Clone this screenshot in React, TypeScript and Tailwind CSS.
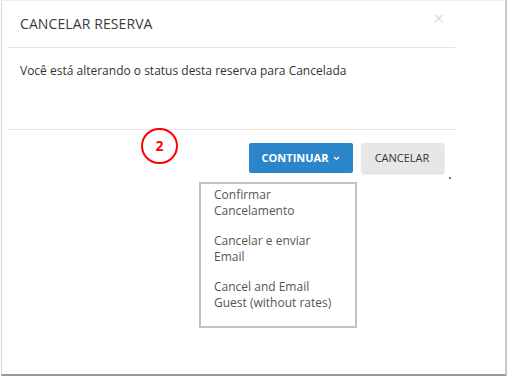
const font = { fontFamily: '"Open Sans", "Liberation Sans", sans-serif' };

const menuItems = [
  ['Confirmar', 'Cancelamento'],
  ['Cancelar e enviar', 'Email'],
  ['Cancel and Email', 'Guest (without rates)'],
];

export default function App() {
  return (
    <div className="w-[509px] h-[378px] bg-white" style={font}>
      <div className="relative ml-[1px] w-[506px] h-[376px] bg-white border-l border-l-[#d6d6d6] border-r-2 border-r-[#c8c8c8] border-b-2 border-b-[#9a9a9a] border-t border-t-[#eeeeee]">
        <div className="ml-[6px] w-[447px]">
          {/* header */}
          <div className="relative h-[47px] border-b border-[#e5e5e5] flex items-center pl-[12px]">
            <h4 className="text-[14px] font-normal text-[#3a3a3a] tracking-[0.1px] mt-[-1px]">CANCELAR RESERVA</h4>
            <span className="absolute right-[11px] top-[8px] text-[19px] leading-none text-[#cccccc] font-light">
              ×
            </span>
          </div>
          {/* body */}
          <div className="h-[82px] border-b border-[#e5e5e5] pl-[12px] pt-[15px]">
            <p className="text-[12px] leading-[16px] text-[#333]">
              Você está alterando o status desta reserva para Cancelada
            </p>
          </div>
          {/* footer */}
          <div className="flex justify-end gap-[8px] pr-[12px] pt-[13px]">
            <button className="w-[104px] h-[30px] rounded-[2px] bg-[#2a86c9] text-white text-[11px] font-bold flex items-center justify-center gap-[5px]">
              CONTINUAR
              <svg width="7" height="5" viewBox="0 0 7 5" fill="none">
                <path d="M1 1l2.5 2.5L6 1" stroke="white" strokeWidth="1.2" />
              </svg>
            </button>
            <button className="w-[82px] h-[30px] rounded-[2px] bg-[#e7e7e7] text-[#333] text-[11px] shadow-[1px_1px_2px_rgba(0,0,0,0.18)]">
              CANCELAR
            </button>
          </div>
        </div>

        {/* resize grip tick */}
        <span className="absolute left-[447px] top-[176px] w-[2px] h-[2px] bg-[#777]" />

        {/* annotation */}
        <div className="absolute left-[139px] top-[127px] w-[37px] h-[36px] rounded-full border-[2.5px] border-[#ff0000] flex items-center justify-center">
          <span className="text-[14px] font-bold text-[#ff0000] leading-none mt-[-1px]">2</span>
        </div>

        {/* dropdown */}
        <div className="absolute left-[197px] top-[181px] w-[158px] h-[146px] border-2 border-[#c2c2c2] bg-white pl-[13px] pt-[3px]">
          {menuItems.map((item, i) => (
            <div key={i} className="text-[12px] leading-[16px] text-[#555] mb-[14px]">
              <div>{item[0]}</div>
              <div>{item[1]}</div>
            </div>
          ))}
        </div>
      </div>
    </div>
  );
}
